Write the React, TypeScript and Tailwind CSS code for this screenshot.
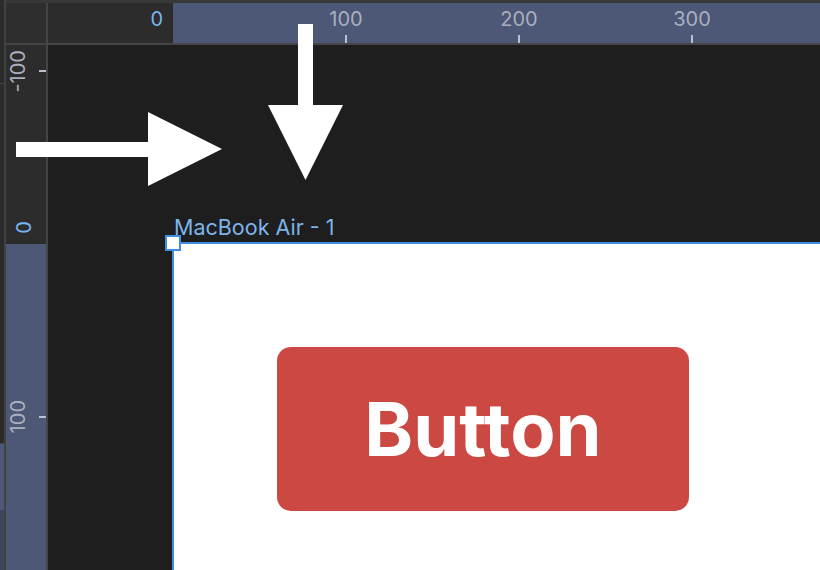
import React from "react";

const font = { fontFamily: "Inter, 'Noto Sans', sans-serif" };

function HTick({ label }: { label: string }) {
  return (
    <div className="flex w-[173px] shrink-0 flex-col items-center">
      <span className="mt-[4px] text-[20px] leading-[24px] text-[#a9afbe]">{label}</span>
      <span className="mt-[4px] h-[8px] w-[2px] bg-[#b9bfcc]" />
    </div>
  );
}

function VTick({ label }: { label: string }) {
  return (
    <div className="flex h-[173px] shrink-0 items-center justify-end">
      <span className="rotate-180 text-[20px] leading-[24px] text-[#a9afbe] [writing-mode:vertical-rl]">
        {label}
      </span>
      <span className="ml-[9px] h-[2px] w-[7px] bg-[#b9bfcc]" />
    </div>
  );
}

function HorizontalRuler() {
  return (
    <div className="flex h-[42px] flex-1 overflow-hidden border-b-2 border-[#454545]">
      <div className="flex w-[125px] shrink-0 justify-end bg-[#2c2c2c] pr-[10px]">
        <span className="mt-[4px] text-[20px] leading-[24px] text-[#77b5ee]">0</span>
      </div>
      <div className="flex flex-1 bg-[#4d5776]">
        <div className="w-[86.5px] shrink-0" />
        <HTick label="100" />
        <HTick label="200" />
        <HTick label="300" />
      </div>
    </div>
  );
}

function VerticalRuler() {
  return (
    <div className="flex w-[42px] shrink-0 flex-col border-r-2 border-[#454545]">
      <div className="flex h-[199px] shrink-0 flex-col justify-end overflow-hidden bg-[#2c2c2c]">
        <VTick label="-100" />
        <div className="flex h-[86.5px] shrink-0 items-end pb-[10px] pl-[6px]">
          <span className="rotate-180 text-[20px] leading-[24px] text-[#77b5ee] [writing-mode:vertical-rl]">
            0
          </span>
        </div>
      </div>
      <div className="flex flex-1 flex-col bg-[#4d5776]">
        <div className="h-[86.5px] shrink-0" />
        <VTick label="100" />
      </div>
    </div>
  );
}

function Arrows() {
  return (
    <svg className="pointer-events-none absolute left-0 top-0" width="820" height="570" viewBox="0 0 820 570">
      <polygon fill="#fff" points="16,142 148,142 148,112 222,149 148,186 148,157 16,157" />
      <polygon fill="#fff" points="298,24 313,24 313,105 343,105 305.5,180 268,105 298,105" />
    </svg>
  );
}

export default function App() {
  return (
    <div className="relative flex h-[570px] w-[820px] overflow-hidden bg-[#1e1e1e]" style={font}>
      {/* outer left strip */}
      <div className="flex w-[6px] shrink-0 flex-col border-r-2 border-[#414141] bg-[#2b2b2b]">
        <div className="h-[84px] shrink-0 border-b border-[#444]" />
        <div className="h-[360px] shrink-0 border-b border-[#444]" />
        <div className="h-[66px] shrink-0 bg-[#4d5776]" />
        <div className="flex-1 bg-[#3e455d]" />
      </div>

      <div className="flex flex-1 flex-col border-t-[3px] border-[#383838]">
        <div className="flex">
          <div className="w-[40px] shrink-0 border-b-2 border-r-2 border-[#454545] bg-[#2e2e2e] box-content" />
          <HorizontalRuler />
        </div>

        <div className="flex flex-1">
          <VerticalRuler />
          <div className="flex flex-1 flex-col bg-[#1e1e1e] pl-[124px] pt-[169px]">
            <span className="h-[28px] pl-[2px] text-[21.5px] leading-[26px] text-[#7db4ea]">MacBook Air - 1</span>
            <div className="relative flex-1 border-l-2 border-t-2 border-[#3f8fe0] bg-white pl-[103px] pt-[103px]">
              <div className="absolute left-[-9px] top-[-9px] h-[16px] w-[16px] border-2 border-[#3f8fe0] bg-white" />
              <div className="flex h-[164px] w-[412px] items-center justify-center rounded-[14px] bg-[#cc4842]">
                <span className="text-[74px] font-bold leading-none text-white">Button</span>
              </div>
            </div>
          </div>
        </div>
      </div>

      <Arrows />
    </div>
  );
}
